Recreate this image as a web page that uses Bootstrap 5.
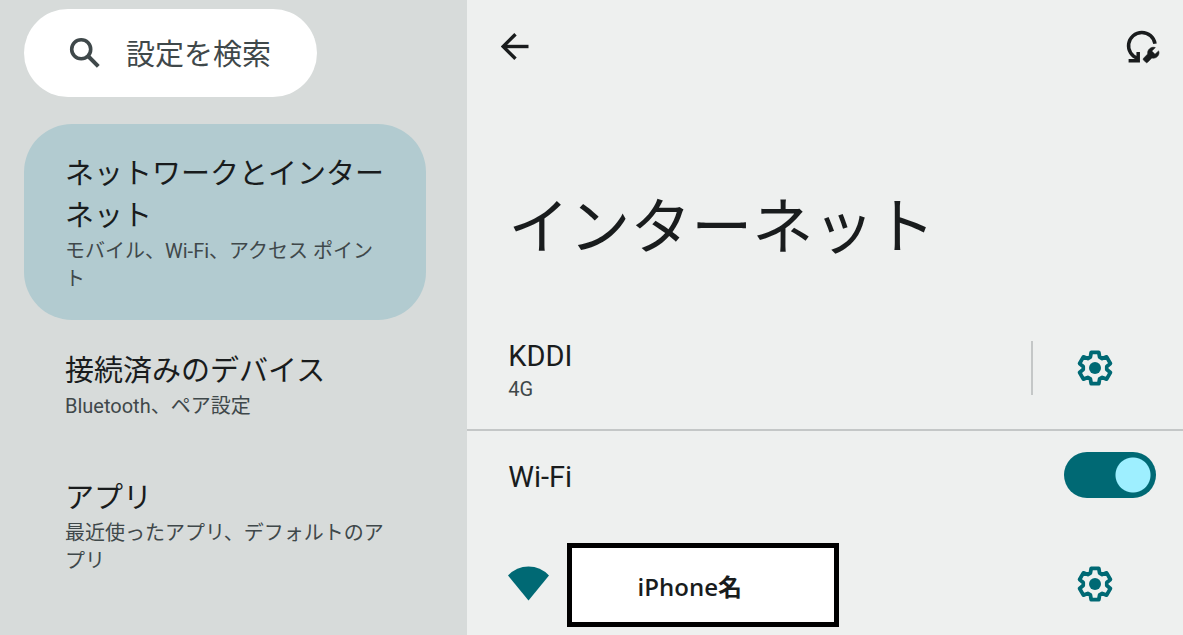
<!DOCTYPE html>
<html lang="ja">
<head>
<meta charset="utf-8">
<meta name="viewport" content="width=device-width, initial-scale=1">
<title>インターネット</title>
<link href="https://cdn.jsdelivr.net/npm/bootstrap@5.3.0/dist/css/bootstrap.min.css" rel="stylesheet">
<style>
  :root { --teal: #006974; --ink: #191c1d; --ink-soft: #3f484a; --line: #c4c7c7; }
  body { font-family: Roboto, "Noto Sans CJK JP", sans-serif; color: var(--ink); background: #eef0ef; }
  a { color: inherit; text-decoration: none; }
  .side-pane { flex: 0 0 39.5%; background: #d7dbda; padding: 9px 41px 8px 24px; }
  .main-pane { min-width: 0; }

  .search-pill { max-width: 293px; height: 88px; padding: 0 32px 0 45px; gap: 25px; margin-bottom: 27px; color: var(--ink-soft); }
  .search-pill input { height: 60px; font-size: 29px; line-height: 56px; padding: 4px 0 0; color: inherit; }
  .search-pill input::placeholder { color: var(--ink-soft); opacity: 1; }

  .menu-list { gap: 1px; }
  .menu-item { padding: 29px 36px 27px 41px; border-radius: 48px; }
  .menu-item.active { background: #b2cbd0; }
  .item-title { font-size: 29px; line-height: 42px; }
  .item-note { font-size: 20px; line-height: 28px; color: var(--ink-soft); }

  .icon-btn { color: inherit; padding: 0; border: 0; line-height: 1; }
  .icon-btn svg, .search-pill svg, .wifi-icon { display: block; flex: none; }
  .tool-bar { height: 93px; padding: 0 23px 0 34px; }
  .page-title { font-size: 61px; line-height: 72px; font-weight: 400; margin: 99px 41px 43px; }

  .net-row { padding: 0 64px 0 41px; }
  .net-row .item-title { line-height: 38px; }
  .carrier-row { height: 124px; border-bottom: 2px solid var(--line); }
  .row-rule { width: 2px; height: 54px; background: var(--line); margin-right: 38px; }
  .gear-btn { width: 48px; height: 48px; color: var(--teal); }
  .wifi-row { height: 88px; padding-right: 27px; }
  .carrier-row .flex-grow-1, .wifi-row label { padding-top: 4px; }
  .form-switch .wifi-switch { width: 92px; height: 46px; margin: 0; border: 0; float: none; }
  .form-switch .wifi-switch:checked {
    background-color: var(--teal);
    background-image: radial-gradient(circle at 69px 23px, #9eefff 17px, transparent 18px);
    background-position: 0 0;
    background-size: 100% 100%;
  }
  .network-row { padding-top: 24px; padding-bottom: 8px; }
  .network-row .gear-btn, .wifi-icon { margin-bottom: 3px; }
  .network-name { width: 272px; height: 84px; border: 5px solid #000; background: #fff; margin-left: 18px; padding: 4px 27px 0 0;
    font: 600 24px/36px "Open Sans", "Noto Sans CJK JP", sans-serif; }
</style>
</head>
<body>
<svg width="0" height="0" class="d-none" aria-hidden="true">
  <symbol id="gear" viewBox="-18 -18 36 36">
    <path fill="none" stroke="currentColor" stroke-width="3.8" stroke-linejoin="round" d="M-3.8-15.6H3.8L4.6-11 7.2-9.5 11.6-11.1 15.4-4.5 11.8-1.5V1.5L15.4 4.5 11.6 11.1 7.2 9.5 4.6 11 3.8 15.6H-3.8L-4.6 11-7.2 9.5-11.6 11.1-15.4 4.5-11.8 1.5V-1.5L-15.4-4.5-11.6-11.1-7.2-9.5-4.6-11Z"/>
    <circle r="6" fill="currentColor"/>
  </symbol>
</svg>
<div class="d-flex min-vh-100">
  <aside class="side-pane">
    <form class="search-pill d-flex align-items-center bg-white rounded-pill" role="search">
      <label for="settings-search" aria-label="設定を検索">
        <svg width="32" height="32" viewBox="0 0 32 32" fill="none" stroke="currentColor" aria-hidden="true"><circle cx="12.2" cy="12.2" r="9.5" stroke-width="3.6"/><path d="M18.5 18.5 29.3 29.3" stroke-width="4"/></svg>
      </label>
      <input id="settings-search" type="text" class="form-control border-0 bg-transparent shadow-none" placeholder="設定を検索">
    </form>
    <nav class="menu-list d-flex flex-column">
      <a href="#network" class="menu-item active" aria-current="page">
        <div class="item-title">ネットワークとインターネット</div>
        <div class="item-note">モバイル、Wi-Fi、アクセス ポイント</div>
      </a>
      <a href="#devices" class="menu-item">
        <div class="item-title">接続済みのデバイス</div>
        <div class="item-note">Bluetooth、ペア設定</div>
      </a>
      <a href="#apps" class="menu-item">
        <div class="item-title">アプリ</div>
        <div class="item-note">最近使ったアプリ、デフォルトのアプリ</div>
      </a>
    </nav>
  </aside>

  <main class="main-pane flex-grow-1">
    <header class="tool-bar d-flex align-items-center justify-content-between">
      <button type="button" class="btn icon-btn" aria-label="戻る">
        <svg width="28" height="28" viewBox="0 0 28 28" fill="none" stroke="currentColor" stroke-width="3.4"><path d="M27.5 13.5H3"/><path d="M14.5 1.2 2.2 13.5 14.5 25.8"/></svg>
      </button>
      <button type="button" class="btn icon-btn" aria-label="インターネット接続を修復">
        <svg width="34" height="34" viewBox="0 0 34 34">
          <g fill="none" stroke="currentColor" stroke-width="3.5">
            <path d="M29 13.8A13.3 13.3 0 1 0 12 28.5"/>
            <path d="M2.600 30.8H12.2V22"/>
          </g>
          <path fill="currentColor" stroke="currentColor" stroke-width=".6" d="M29.3 17.6C25.4 16.2 21.1 19.3 21.7 24L17.6 28.2Q16.7 29.2 17.6 30.1L19.8 32.3Q20.7 33.2 21.6 32.3L25.8 28.1C30.6 29 34.2 24.8 32.6 20.9L29 24.3 25.8 21.1Z"/>
        </svg>
      </button>
    </header>

    <h1 class="page-title">インターネット</h1>

    <section class="net-row carrier-row d-flex align-items-center">
      <div class="flex-grow-1">
        <div class="item-title">KDDI</div>
        <div class="item-note">4G</div>
      </div>
      <div class="row-rule"></div>
      <button type="button" class="btn icon-btn gear-btn d-flex align-items-center justify-content-center" aria-label="KDDI の設定"><svg width="36" height="36"><use href="#gear"/></svg></button>
    </section>

    <section class="net-row wifi-row d-flex align-items-center justify-content-between">
      <label class="item-title" for="wifi-switch">Wi-Fi</label>
      <div class="form-check form-switch p-0 m-0 d-flex">
        <input class="form-check-input wifi-switch" type="checkbox" role="switch" id="wifi-switch" checked>
      </div>
    </section>

    <section class="net-row network-row d-flex align-items-center">
      <svg class="wifi-icon" width="41" height="35" viewBox="0 0 41 35" fill="var(--teal)" aria-hidden="true"><path d="M20.5 34.6 0 9.4Q8.5.4 20.5.4T41 9.4Z"/></svg>
      <div class="network-name d-flex align-items-center justify-content-center">iPhone名</div>
      <button type="button" class="btn icon-btn gear-btn ms-auto d-flex align-items-center justify-content-center" aria-label="ネットワークの設定"><svg width="36" height="36"><use href="#gear"/></svg></button>
    </section>
  </main>
</div>
<script src="https://cdn.jsdelivr.net/npm/bootstrap@5.3.0/dist/js/bootstrap.bundle.min.js"></script>
</body>
</html>
